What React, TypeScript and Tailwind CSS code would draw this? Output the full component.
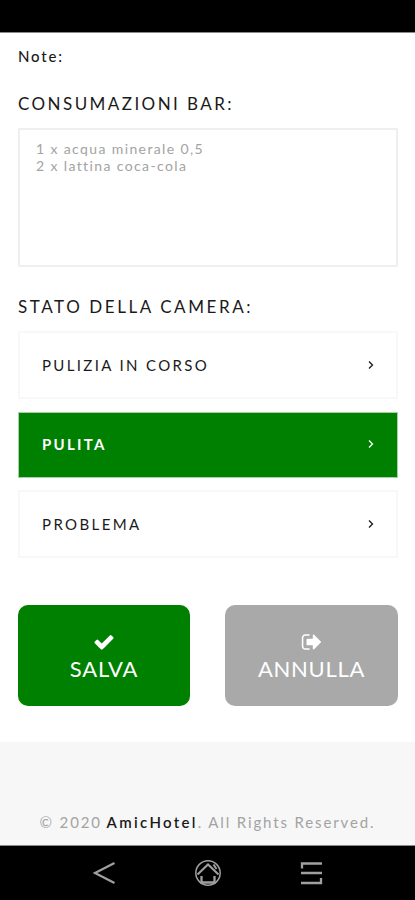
import { useState } from 'react';
import clsx from 'clsx';

const states = [
  { id: 'progress', label: 'PULIZIA IN CORSO', box: 'h-[68px] mb-[13px]', text: 'tracking-[2.35px]' },
  { id: 'clean', label: 'PULITA', box: 'h-[66px] mb-3', text: 'tracking-[2.3px]' },
  { id: 'problem', label: 'PROBLEMA', box: 'h-[68px]', text: 'tracking-[2.4px]' },
];

function CheckIcon() {
  return (
    <svg className="size-[22px]" viewBox="0 0 1792 1792" fill="currentColor">
      <path d="M1671 566q0 40-28 68l-724 724-136 136q-28 28-68 28t-68-28l-136-136-362-362q-28-28-28-68t28-68l136-136q28-28 68-28t68 28l294 295 656-657q28-28 68-28t68 28l136 136q28 28 28 68z" />
    </svg>
  );
}

function SignOutIcon() {
  return (
    <svg className="size-[22px]" viewBox="0 0 1792 1792" fill="currentColor">
      <path d="M704 1440q0 4 1 20t.5 26.5-3 23.5-10 19.5-20.5 6.5h-320q-119 0-203.5-84.5t-84.5-203.5v-704q0-119 84.5-203.5t203.5-84.5h320q13 0 22.5 9.5t9.5 22.5q0 4 1 20t.5 26.5-3 23.5-10 19.5-20.5 6.5h-320q-66 0-113 47t-47 113v704q0 66 47 113t113 47h312l11.5 1 11.5 3 8 5.5 7 9 2 13.5zm928-544q0 26-19 45l-544 544q-19 19-45 19t-45-19-19-45v-288h-448q-26 0-45-19t-19-45v-384q0-26 19-45t45-19h448v-288q0-26 19-45t45-19 45 19l544 544q19 19 19 45z" />
    </svg>
  );
}

function NavBar() {
  return (
    <nav className="flex h-[55px] items-start justify-between border-t border-[#8a8a8a] bg-black pl-[90px] pr-[90px] pt-[13px] text-[#a0a0a0]">
      <svg className="size-7" viewBox="0 0 28 28" fill="none" stroke="currentColor" strokeWidth="2.2">
        <path d="M24.500 4 5 14l19.500 10" />
      </svg>
      <svg className="size-7" viewBox="0 0 28 28" fill="none" stroke="currentColor">
        <circle cx="14" cy="14" r="12.2" strokeWidth="1.5" />
        <path d="M3.500 15.500 14 5.500l10.500 10M19.500 5.500l3 4.500" strokeWidth="2" />
        <path d="M7.500 17v6.500h13V17" strokeWidth="2.3" />
      </svg>
      <svg className="size-7" viewBox="0 0 28 28" fill="none" stroke="currentColor" strokeWidth="2.300">
        <path d="M25 4.500H5v5M4 14h21M4 24h20v-5" />
      </svg>
    </nav>
  );
}

export default function App() {
  const [active, setActive] = useState('clean');

  return (
    <div className="flex h-[900px] w-full flex-col overflow-hidden bg-white font-['Lato',sans-serif] text-[#1a1a1a]">
      {/* Status bar */}
      <div className="h-[33px] shrink-0 border-b border-[#8a8a8a] bg-black" />

      <main className="flex h-[709px] shrink-0 flex-col pl-[18px] pr-[17px]">
        <p className="mt-[13px] text-[15px] font-medium leading-5 tracking-[1.8px]">Note:</p>

        <h2 className="mt-[26px] text-[17px] leading-6 tracking-[2.43px]">CONSUMAZIONI BAR:</h2>
        <textarea
          className="mt-3 block h-[139px] w-full shrink-0 resize-none border-2 border-[#efefef] px-4 pt-[10px] text-[14px] leading-[17px] tracking-[1.38px] text-[#a3a3a3] outline-none"
          defaultValue={'1 x acqua minerale 0,5\n2 x lattina coca-cola'}
        />

        <h2 className="mt-[28px] text-[17px] leading-6 tracking-[2.57px]">STATO DELLA CAMERA:</h2>
        <div className="mt-3 flex flex-col">
          {states.map((s) => (
            <button
              key={s.id}
              onClick={() => setActive(s.id)}
              className={clsx(
                'flex items-center justify-between text-[15px]',
                s.box,
                active === s.id
                  ? 'border border-[#a9cfa9] bg-[#008000] pl-[23px] pr-[22px] pb-0.5 font-bold text-white'
                  : 'border-2 border-[#f8f8f8] bg-white pl-[22px] pr-[21px]',
              )}
            >
              <span className={s.text}>{s.label}</span>
              <svg className="h-[10px] w-2" viewBox="0 0 8 10" fill="none" stroke="currentColor" strokeWidth="1.3">
                <path d="m2 1.500 3.500 3.500L2 8.500" />
              </svg>
            </button>
          ))}
        </div>

        <div className="mt-[47px] flex gap-[35px]">
          <button className="flex h-[101px] w-[172px] flex-col items-center rounded-[10px] bg-[#008000] pt-[26px] text-white">
            <CheckIcon />
            <span className="mt-0.5 text-[22px] leading-7 tracking-[0.8px]">SALVA</span>
          </button>
          <button className="flex h-[101px] flex-1 flex-col items-center rounded-[10px] bg-[#a9a9a9] pt-[26px] text-white">
            <SignOutIcon />
            <span className="mt-0.5 text-[22px] leading-7 tracking-[0.7px]">ANNULLA</span>
          </button>
        </div>
      </main>

      <footer className="flex h-[103px] shrink-0 items-end justify-center bg-[#f7f7f7] pb-[13px] text-[15px] leading-5 text-[#a3a3a3]">
        <p className="whitespace-nowrap tracking-[1.87px]">
          © 2020 <span className="-ml-px font-semibold tracking-[2.3px] text-[#1a1a1a]">AmicHotel</span>. All Rights Reserved.
        </p>
      </footer>

      <NavBar />
    </div>
  );
}
